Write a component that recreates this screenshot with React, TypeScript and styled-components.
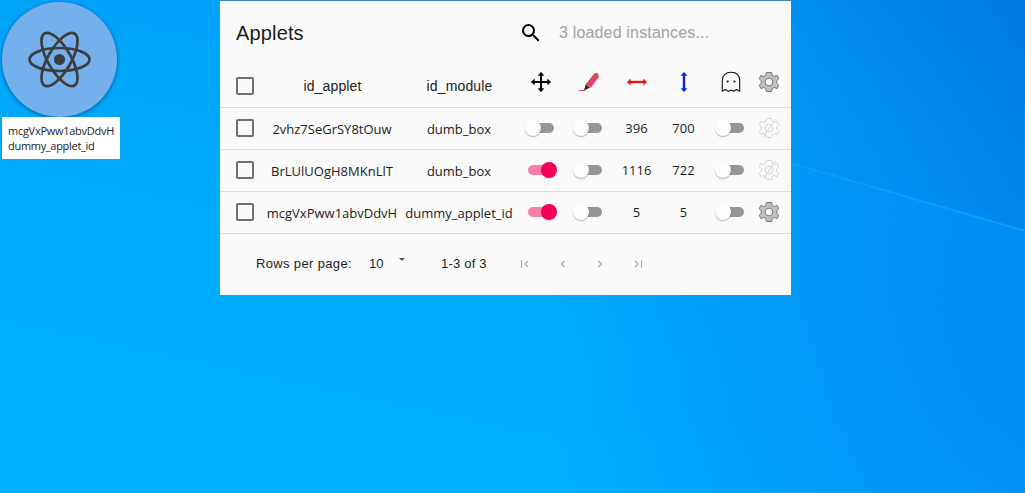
import React from "react";
import styled, { createGlobalStyle } from "styled-components";

const GlobalStyle = createGlobalStyle`
  * { box-sizing: border-box; }
  body { margin: 0; overflow: hidden; }
`;

const ui = `"Open Sans", "Noto Sans", sans-serif`;
const arial = `"Liberation Sans", Arial, sans-serif`;

const Desktop = styled.main`
  position: relative;
  display: flex;
  width: 1025px;
  height: 493px;
  overflow: hidden;
  background:
    radial-gradient(ellipse 520px 620px at 104% 65%, rgba(0, 138, 243, 0.85) 20%, rgba(0, 150, 247, 0) 100%),
    linear-gradient(12deg, #00b0ff 0%, #00adfe 40%, #00a5fa 66%, #009bf6 100%);
`;

const Wallpaper = styled.svg`
  position: absolute;
  inset: 0;
`;

const Applet = styled.section`
  position: relative;
  width: 118px;
  margin: 2px 100px 0 2px;
`;

const Bubble = styled.div`
  display: flex;
  align-items: center;
  justify-content: center;
  width: 115px;
  height: 115px;
  border-radius: 50%;
  background: #74b0ec;
  box-shadow: 0 1px 4px rgba(0, 40, 90, 0.6);
`;

const AppletLabel = styled.div`
  position: relative;
  height: 42px;
  padding: 6px 0 0 6px;
  background: #fff;
  color: #222;
  font: 11px/15px ${ui};
  white-space: nowrap;
`;

const Line = styled.div<{ $spacing: number }>`
  letter-spacing: ${(p) => p.$spacing}px;
`;

const Panel = styled.section`
  position: relative;
  width: 571px;
  height: 295px;
  border-top: 1px solid #3b83bd;
  background: #fafafa;
  color: #1c1c1c;
`;

const Toolbar = styled.header`
  display: flex;
  align-items: center;
  height: 64px;
  padding-left: 16px;
`;

const Title = styled.h1`
  width: 283px;
  margin: 0;
  font: 400 20px/24px ${arial};
  letter-spacing: 0.15px;
`;

const SearchHint = styled.span`
  margin-left: 16px;
  color: #a0a0a0;
  font: 16px/20px ${arial};
  letter-spacing: 0.17px;
`;

const Row = styled.div<{ $head?: boolean }>`
  display: grid;
  grid-template-columns: 42px 140px 114px 49px 48px 47px 47px 47px 29px;
  height: ${(p) => (p.$head ? 43 : 42)}px;
  padding-bottom: ${(p) => (p.$head ? 1 : 0)}px;
  border-bottom: 1px solid #dcdcdc;
`;

const Cell = styled.div<{ $shift?: number }>`
  display: flex;
  align-items: center;
  justify-content: center;
  padding-top: ${(p) => Math.max(0, p.$shift ?? 0)}px;
  padding-bottom: ${(p) => Math.max(0, -(p.$shift ?? 0))}px;
  white-space: nowrap;
`;

const CheckCell = styled.div<{ $head?: boolean }>`
  display: flex;
  align-items: center;
  padding: 0 0 ${(p) => (p.$head ? 0 : 2)}px 16px;
`;

const Check = styled.span`
  width: 18px;
  height: 18px;
  border: 2px solid #707070;
  border-radius: 2px;
`;

const HeadText = styled.span`
  padding-left: 1px;
  font: 14px/20px ${arial};
  letter-spacing: 0.15px;
`;

const BodyText = styled.span`
  font: 13px/20px ${ui};
`;

const Track = styled.span<{ $on: boolean }>`
  position: relative;
  width: 26px;
  height: 10px;
  border-radius: 5px;
  background: ${(p) => (p.$on ? "#f97fa9" : "#969696")};

  &::after {
    content: "";
    position: absolute;
    top: -3px;
    left: ${(p) => (p.$on ? 13 : -3)}px;
    width: 16px;
    height: 16px;
    border-radius: 50%;
    background: ${(p) => (p.$on ? "#f50057" : "#fdfdfd")};
    box-shadow: ${(p) => (p.$on ? "0 1px 1px rgba(0,0,0,.1)" : "0 1px 1px rgba(0,0,0,.3)")};
  }
`;

const Pager = styled.footer`
  display: flex;
  align-items: center;
  height: 60px;
  padding-left: 36px;
  font: 13px/16px ${arial};
`;

const PagerText = styled.span<{ $width: number; $spacing: number }>`
  width: ${(p) => p.$width}px;
  letter-spacing: ${(p) => p.$spacing}px;
  white-space: nowrap;
`;

const Caret = styled.span`
  width: 6px;
  height: 3px;
  margin: 0 36px 9px 0;
  background: #555;
  clip-path: polygon(0 0, 100% 0, 50% 100%);
`;

const PageButtons = styled.div`
  display: flex;
  gap: 25.5px;
  padding-left: 30px;
`;

const ReactLogo = () => (
  <svg width="64" height="64" viewBox="-32 -32 64 64" fill="none" stroke="#3d3d3d" strokeWidth="2.7">
    <g transform="translate(-.5 -.5)">
      <ellipse rx="30" ry="11.5" />
      <ellipse rx="30" ry="11.5" transform="rotate(60)" />
      <ellipse rx="30" ry="11.5" transform="rotate(120)" />
      <circle r="5.6" fill="#3d3d3d" stroke="none" />
    </g>
  </svg>
);

const SearchIcon = () => (
  <svg width="24" height="24" viewBox="0 0 24 24">
    <path d="M15.5 14h-.79l-.28-.27A6.47 6.47 0 0 0 16 9.5 6.5 6.5 0 1 0 9.5 16c1.61 0 3.09-.59 4.23-1.57l.27.28v.79l5 4.99L20.49 19zm-6 0a4.5 4.5 0 1 1 0-9 4.5 4.5 0 0 1 0 9z" />
  </svg>
);

const MoveIcon = () => (
  <svg width="20" height="20" viewBox="-10 -10 20 20">
    <path d="M0-8V8M-8 0H8" stroke="#000" strokeWidth="2" />
    <path d="M0-10 3-6.500H-3ZM0 10 3 6.500H-3ZM-10 0-6.500-3V3ZM10 0 6.500-3V3Z" strokeLinejoin="round" stroke="#000" strokeWidth=".3" />
  </svg>
);

const PenIcon = () => (
  <svg width="20" height="20" viewBox="0 0 20 20">
    <path d="M15.500 1.200 17 .8 19.600 2.600V5.200L12 15.500 6.500 12.500Z" fill="#de4463" />
    <path d="m6.500 12.500 4.800 3.300-2.300.8-2.800 1.500-1.200-.9 1-2Z" fill="#222" />
    <path d="M0 18.700 6 18.500 5.500 17.600" stroke="#d8405f" strokeWidth="1" fill="none" />
  </svg>
);

const ArrowIcon = ({ color, vertical }: { color: string; vertical?: boolean }) => (
  <svg width="20" height="20" viewBox="-10 -10 20 20" fill={color} stroke={color} strokeWidth=".4" strokeLinejoin="round">
    <g transform={vertical ? "rotate(90)" : undefined}>
      <path d="M-9.800 0-6.500-3V-1H6.500V-3L9.800 0 6.500 3V1H-6.500V3Z" />
    </g>
  </svg>
);

const GhostIcon = () => (
  <svg width="20" height="22" viewBox="0 0 20 22" fill="none" stroke="#111" strokeWidth="1.1">
    <path d="M1.300 20.200V9.500C1.300 4.500 4.500 1.300 10 1.300S18.700 4.500 18.700 9.500V20.200C17.500 20.200 17 18.600 15.600 18.600 14.200 18.600 14 20.200 12.800 20.200 11.600 20.200 11.300 19.200 10 19.200S8.400 20.200 7.200 20.200C6 20.200 5.800 18.600 4.400 18.600 3 18.600 2.500 20.200 1.300 20.200Z" />
    <circle cx="6.700" cy="10.500" r="1.100" fill="#111" stroke="none" />
    <circle cx="13.500" cy="10.500" r="1.100" fill="#111" stroke="none" />
  </svg>
);

const gearPath =
  "M-2.600-9.500H2.600L3.200-6.600 5.400-5.400 8-6.700 9.800-3.200 7.700-1.200V1.200L9.800 3.200 8 6.700 5.400 5.400 3.200 6.600 2.600 9.500H-2.600L-3.200 6.600-5.400 5.400-8 6.700-9.800 3.200-7.700 1.200V-1.200L-9.800-3.200-8-6.700-5.400-5.400-3.200-6.600Z";

const GearIcon = ({ off }: { off?: boolean }) => (
  <svg
    width="22"
    height="22"
    viewBox="-11 -11 22 22"
    fill={off ? "none" : "#c0c0c0"}
    stroke={off ? "#d6d6d6" : "#777"}
    strokeLinejoin="round"
  >
    <path d={gearPath} />
    <circle r="3.900" fill="#fafafa" />
    {off && <path d="M-5.500 9 6.500-9" />}
  </svg>
);

const PageIcon = ({ bar, flip }: { bar?: boolean; flip?: boolean }) => (
  <svg width="12" height="12" viewBox="-6 -6 12 12" fill="none" stroke="#aaa" strokeWidth="1.200">
    <g transform={flip ? "scale(-1 1)" : undefined}>
      <path d={bar ? "M3-3 0 0 3 3M-3.500-4V4" : "M1.500-3-1.500 0 1.500 3"} />
    </g>
  </svg>
);

type Instance = {
  id: string;
  module: string;
  movable: boolean;
  width: number;
  height: number;
  configurable: boolean;
};

const instances: Instance[] = [
  { id: "2vhz7SeGrSY8tOuw", module: "dumb_box", movable: false, width: 396, height: 700, configurable: false },
  { id: "BrLUlUOgH8MKnLlT", module: "dumb_box", movable: true, width: 1116, height: 722, configurable: false },
  { id: "mcgVxPww1abvDdvH", module: "dummy_applet_id", movable: true, width: 5, height: 5, configurable: true },
];

export default function App() {
  return (
    <Desktop>
      <GlobalStyle />
      <Wallpaper width="1025" height="493" viewBox="0 0 1025 493">
        <defs>
          <linearGradient id="shade" x1="0" y1="0.6" x2="1" y2="0">
            <stop offset="0.2" stopColor="#008ceb" stopOpacity="0.15" />
            <stop offset="0.7" stopColor="#007fe2" stopOpacity="0.7" />
            <stop offset="1" stopColor="#0076dc" stopOpacity="0.9" />
          </linearGradient>
        </defs>
        <path d="M700 0H1025V231L791 163.500 700 137Z" fill="url(#shade)" />
        <path d="M780 160 1025 231" stroke="#0ba0fb" strokeWidth="1.800" />
      </Wallpaper>
      <Applet>
        <Bubble>
          <ReactLogo />
        </Bubble>
        <AppletLabel>
          <Line $spacing={-0.27}>mcgVxPww1abvDdvH</Line>
          <Line $spacing={-0.3}>dummy_applet_id</Line>
        </AppletLabel>
      </Applet>
      <Panel>
        <Toolbar>
          <Title>Applets</Title>
          <SearchIcon />
          <SearchHint>3 loaded instances...</SearchHint>
        </Toolbar>
        <Row $head>
          <CheckCell $head><Check /></CheckCell>
          <Cell><HeadText>id_applet</HeadText></Cell>
          <Cell><HeadText>id_module</HeadText></Cell>
          <Cell $shift={-8}><MoveIcon /></Cell>
          <Cell $shift={-8}><PenIcon /></Cell>
          <Cell $shift={-8}><ArrowIcon color="#d9161b" /></Cell>
          <Cell $shift={-8}><ArrowIcon color="#0b24d6" vertical /></Cell>
          <Cell $shift={-8}><GhostIcon /></Cell>
          <Cell $shift={-8}><GearIcon /></Cell>
        </Row>
        {instances.map((it) => (
          <Row key={it.id}>
            <CheckCell><Check /></CheckCell>
            <Cell><BodyText>{it.id}</BodyText></Cell>
            <Cell><BodyText>{it.module}</BodyText></Cell>
            <Cell $shift={-2}><Track $on={it.movable} /></Cell>
            <Cell $shift={-2}><Track $on={false} /></Cell>
            <Cell $shift={-2}><BodyText>{it.width}</BodyText></Cell>
            <Cell $shift={-2}><BodyText>{it.height}</BodyText></Cell>
            <Cell $shift={-2}><Track $on={false} /></Cell>
            <Cell $shift={-2}><GearIcon off={!it.configurable} /></Cell>
          </Row>
        ))}
        <Pager>
          <PagerText $width={113} $spacing={0.35}>Rows per page:</PagerText>
          <PagerText $width={30} $spacing={0}>10</PagerText>
          <Caret />
          <PagerText $width={48} $spacing={0.2}>1-3 of 3</PagerText>
          <PageButtons>
            <PageIcon bar />
            <PageIcon />
            <PageIcon flip />
            <PageIcon bar flip />
          </PageButtons>
        </Pager>
      </Panel>
    </Desktop>
  );
}
